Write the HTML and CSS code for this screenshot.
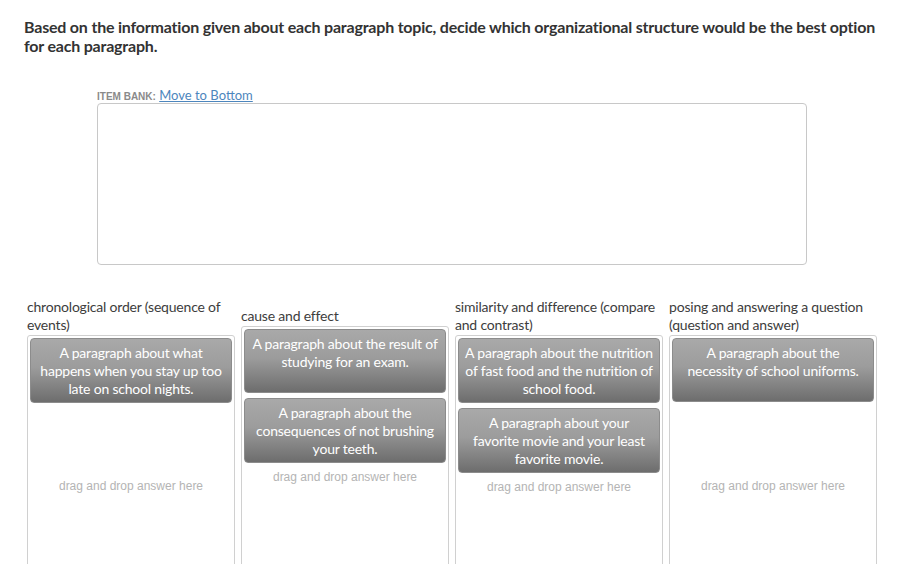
FILE: index.html
```html
<!DOCTYPE html>
<html>
<head>
<meta charset="utf-8">
<link rel="stylesheet" href="styles.css">
</head>
<body>
<div class="page">
  <p class="prompt">Based on the information given about each paragraph topic, decide which organizational structure would be the best option for each paragraph.</p>
  <div class="bank">
    <div class="bank-label"><span class="bank-title">ITEM BANK:</span> <a class="bank-link" href="#">Move to Bottom</a></div>
    <div class="bank-box"></div>
  </div>
  <div class="columns">
    <div class="col">
      <div class="col-head">chronological order (sequence of events)</div>
      <div class="drop">
        <div class="cards">
          <div class="card">A paragraph about what happens when you stay up too late on school nights.</div>
        </div>
        <div class="hint">drag and drop answer here</div>
      </div>
    </div>
    <div class="col">
      <div class="col-head">cause and effect</div>
      <div class="drop">
        <div class="cards">
          <div class="card">A paragraph about the result of studying for an exam.</div>
          <div class="card">A paragraph about the consequences of not brushing your teeth.</div>
        </div>
        <div class="hint">drag and drop answer here</div>
      </div>
    </div>
    <div class="col">
      <div class="col-head">similarity and difference (compare and contrast)</div>
      <div class="drop">
        <div class="cards">
          <div class="card">A paragraph about the nutrition of fast food and the nutrition of school food.</div>
          <div class="card">A paragraph about your<br>favorite movie and your least favorite movie.</div>
        </div>
        <div class="hint">drag and drop answer here</div>
      </div>
    </div>
    <div class="col">
      <div class="col-head">posing and answering a question (question and answer)</div>
      <div class="drop">
        <div class="cards">
          <div class="card">A paragraph about the<br>necessity of school uniforms.</div>
        </div>
        <div class="hint">drag and drop answer here</div>
      </div>
    </div>
  </div>
</div>
</body>
</html>
```

FILE: styles.css
```css
html, body {
  margin: 0;
  padding: 0;
  background: #ffffff;
  overflow: hidden;
}
.page {
  padding: 17px 18px 0 24px;
  font-family: Lato, "Open Sans", sans-serif;
  color: #333333;
}
.prompt {
  margin: 0;
  font-size: 16px;
  line-height: 19px;
  font-weight: bold;
  letter-spacing: -0.2px;
  color: #333333;
}
.bank {
  margin: 32px 0 0 73px;
  width: 710px;
}
.bank-label {
  height: 16px;
  font-size: 13px;
  line-height: 16px;
}
.bank-title {
  font-family: "Liberation Sans", Arial, sans-serif;
  font-size: 10px;
  font-weight: bold;
  color: #8a8a8a;
}
.bank-link {
  color: #4d86bd;
  text-decoration: underline;
}
.bank-box {
  height: 160px;
  border: 1px solid #c8c8c8;
  border-radius: 4px;
}
.columns {
  display: flex;
  align-items: center;
  gap: 6px;
  margin: 33px 0 0 3px;
}
.col {
  width: 208px;
  display: flex;
  flex-direction: column;
}
.col-head {
  font-size: 14px;
  line-height: 18px;
  letter-spacing: -0.2px;
  color: #3d3d3d;
  margin-bottom: 1px;
}
.drop {
  box-sizing: border-box;
  height: 300px;
  border: 1px solid #d0d0d0;
  border-radius: 3px;
  padding: 2px;
}
.cards {
  display: flex;
  flex-direction: column;
  gap: 5px;
  min-height: 134px;
}
.card {
  box-sizing: border-box;
  min-height: 64px;
  padding: 5px 3px 4px;
  border: 1px solid #8c8c8c;
  border-radius: 4px;
  background: linear-gradient(#a9a9a9 0%, #9c9c9c 45%, #7a7a7a 85%, #6d6d6d 100%);
  color: #ffffff;
  font-size: 14px;
  line-height: 18px;
  letter-spacing: -0.2px;
  text-align: center;
}
.hint {
  margin-top: 7px;
  font-family: "Liberation Sans", Arial, sans-serif;
  font-size: 12px;
  line-height: 14px;
  color: #b4b4b4;
  text-align: center;
}
```
